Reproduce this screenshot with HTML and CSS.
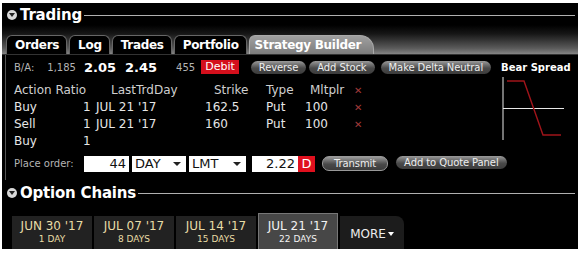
FILE: index.html
```html
<!DOCTYPE html>
<html lang="en">
<head>
    <meta charset="UTF-8">
    <title>Trading - Strategy Builder</title>
    <link rel="stylesheet" href="styles.css">
</head>
<body>
    <div class="frame">
        <div class="section-head">
            <span class="caret"></span>
            <h2>Trading</h2>
            <span class="rule"></span>
        </div>

        <div class="tabbar">
            <div class="tab">Orders</div>
            <div class="tab">Log</div>
            <div class="tab">Trades</div>
            <div class="tab">Portfolio</div>
            <div class="tab active">Strategy Builder</div>
        </div>

        <div class="panel">
            <div class="ba-row">
                <span class="muted ba-label">B/A:</span>
                <span class="muted bid-size">1,185</span>
                <span class="price">2.05</span>
                <span class="price">2.45</span>
                <span class="muted ask-size">455</span>
                <span class="debit">Debit</span>
                <span class="pill">Reverse</span>
                <span class="pill">Add Stock</span>
                <span class="pill">Make Delta Neutral</span>
                <span class="strategy-name">Bear Spread</span>
            </div>

            <div class="legs-area">
                <div class="legs">
                    <div class="leg head">
                        <span class="c-action">Action Ratio</span>
                        <span class="c-ratio"></span>
                        <span class="c-date h">LastTrdDay</span>
                        <span class="c-strike h">Strike</span>
                        <span class="c-type">Type</span>
                        <span class="c-mult h">Mltplr</span>
                        <span class="c-del">&#x2715;</span>
                    </div>
                    <div class="leg">
                        <span class="c-action">Buy</span>
                        <span class="c-ratio">1</span>
                        <span class="c-date">JUL 21 '17</span>
                        <span class="c-strike">162.5</span>
                        <span class="c-type">Put</span>
                        <span class="c-mult">100</span>
                        <span class="c-del">&#x2715;</span>
                    </div>
                    <div class="leg">
                        <span class="c-action">Sell</span>
                        <span class="c-ratio">1</span>
                        <span class="c-date">JUL 21 '17</span>
                        <span class="c-strike">160</span>
                        <span class="c-type">Put</span>
                        <span class="c-mult">100</span>
                        <span class="c-del">&#x2715;</span>
                    </div>
                    <div class="leg">
                        <span class="c-action">Buy</span>
                        <span class="c-ratio">1</span>
                    </div>
                </div>

                <svg class="payoff" width="66" height="64" viewBox="0 0 66 64">
                    <line x1="2" y1="0" x2="2" y2="63" stroke="#e8e8e8" stroke-width="1"/>
                    <line x1="2" y1="31.5" x2="63" y2="31.5" stroke="#e8e8e8" stroke-width="1"/>
                    <polyline points="6,4 23,4 42,58 60,58" fill="none" stroke="#a0141a" stroke-width="1.4"/>
                </svg>
            </div>

            <div class="order-row">
                <span class="muted order-label">Place order:</span>
                <span class="field qty">44</span>
                <span class="field select tif">DAY<i class="arrow"></i></span>
                <span class="field select otype">LMT<i class="arrow"></i></span>
                <span class="field limit">2.22</span><span class="side">D</span>
                <span class="pill transmit">Transmit</span>
                <span class="pill quote">Add to Quote Panel</span>
            </div>
        </div>

        <div class="section-head chains-head">
            <span class="caret"></span>
            <h2>Option Chains</h2>
            <span class="rule"></span>
        </div>

        <div class="expiries">
            <div class="expiry"><b>JUN 30 '17</b><small>1 DAY</small></div>
            <div class="expiry"><b>JUL 07 '17</b><small>8 DAYS</small></div>
            <div class="expiry"><b>JUL 14 '17</b><small>15 DAYS</small></div>
            <div class="expiry selected"><b>JUL 21 '17</b><small>22 DAYS</small></div>
            <div class="expiry more">MORE <i class="arrow light"></i></div>
        </div>
    </div>
</body>
</html>
```

FILE: styles.css
```css
* {
    margin: 0;
    padding: 0;
    box-sizing: border-box;
}

body {
    background: #fff;
    font-family: "DejaVu Sans", Verdana, sans-serif;
    color: #e2e2e2;
}

.frame {
    margin: 3px 2px 0 2px;
    height: 246px;
    background: #000;
    display: flex;
    flex-direction: column;
    overflow: hidden;
}

/* section headers */
.section-head {
    display: flex;
    align-items: center;
    height: 20px;
    margin-top: 2px;
    padding-left: 5px;
    flex-shrink: 0;
}

.section-head h2 {
    font-size: 15px;
    font-weight: bold;
    color: #fff;
    margin-left: 3px;
    letter-spacing: -0.2px;
}

.caret {
    width: 10px;
    height: 10px;
    border-radius: 50%;
    background: #d8d8d8;
    position: relative;
}

.caret::after {
    content: '';
    position: absolute;
    left: 2px;
    top: 3px;
    border-left: 3px solid transparent;
    border-right: 3px solid transparent;
    border-top: 4px solid #222;
}

.rule {
    flex: 1;
    height: 1px;
    background: #b0b0b0;
    margin: 0 3px 0 2px;
}

/* tabs */
.tabbar {
    height: 30px;
    flex-shrink: 0;
    display: flex;
    align-items: flex-end;
    padding-left: 4px;
    gap: 2px;
    background: linear-gradient(to bottom, #000 0%, #161616 30%, #5a5a5a 80%, #858585 100%);
    border-bottom: 1px solid #333;
}

.tab {
    height: 19px;
    padding: 0 7px 0 8px;
    background: #000;
    border: 1px solid #666;
    border-bottom: none;
    border-radius: 6px 6px 0 0;
    font-size: 12px;
    font-weight: bold;
    color: #fff;
    line-height: 18px;
    letter-spacing: -0.3px;
}

.tab.active {
    background: linear-gradient(to bottom, #a0a0a0, #7c7c7c);
    border-color: #aaa;
    padding: 0 12px 0 5px;
    border-radius: 6px 14px 0 0;
}

/* panel */
.panel {
    margin-left: 3px;
    border-left: 1px solid #555;
    height: 125px;
    flex-shrink: 0;
    padding-left: 8px;
}

.muted {
    color: #b4b4b4;
    font-size: 10px;
}

.ba-row {
    display: flex;
    align-items: center;
    height: 14px;
    margin-top: 5px;
    white-space: nowrap;
}

.bid-size { margin-left: 13px; }

.price {
    font-size: 13px;
    font-weight: bold;
    color: #fff;
    margin-left: 8px;
}

.price + .price { margin-left: 9px; }

.ask-size { margin-left: 19px; }

.debit {
    margin-left: 6px;
    background: #d40f1c;
    color: #fff;
    font-size: 11px;
    height: 14px;
    line-height: 14px;
    padding: 0 4px;
}

.pill {
    margin-left: 12px;
    height: 13px;
    line-height: 13px;
    padding: 0 8px;
    border-radius: 7px;
    background: linear-gradient(to bottom, #9a9a9a, #4a4a4a 55%, #3c3c3c);
    color: #eee;
    font-size: 10px;
    letter-spacing: -0.1px;
    white-space: nowrap;
}

.pill + .pill { margin-left: 3px; }
.pill + .pill + .pill { margin-left: 6px; }

.strategy-name {
    margin-left: 10px;
    font-size: 10px;
    font-weight: bold;
    color: #fff;
}

/* legs table */
.legs-area {
    display: flex;
    height: 68px;
    margin-top: 8px;
}

.legs {
    width: 487px;
}

.leg {
    display: flex;
    height: 17px;
    font-size: 12px;
    line-height: 17px;
    color: #e6e6e6;
}

.leg.head { color: #cfcfcf; }

.c-action { width: 66px; white-space: nowrap; }
.c-ratio { width: 14px; padding-left: 3px; }
.c-date { width: 106px; padding-left: 2px; }
.c-date.h { padding-left: 17px; }
.c-strike { width: 62px; padding-left: 5px; }
.c-strike.h { padding-left: 14px; }
.c-type { width: 40px; padding-left: 4px; }
.c-mult { width: 48px; padding-left: 3px; }
.c-mult.h { padding-left: 8px; }
.c-del { color: #a33a3a; font-size: 10px; padding-left: 4px; }

.payoff {
    margin-top: -5px;
}

/* order entry */
.order-row {
    display: flex;
    align-items: center;
    height: 17px;
    margin-top: 5px;
}

.order-label { width: 70px; }

.field {
    height: 16px;
    background: #fff;
    color: #111;
    font-size: 13px;
    line-height: 16px;
    padding: 0 3px;
}

.qty { width: 45px; text-align: right; }

.select {
    margin-left: 3px;
    display: flex;
    align-items: center;
    justify-content: space-between;
    padding-right: 5px;
}

.tif { width: 54px; }
.otype { width: 57px; }

.arrow {
    border-left: 4px solid transparent;
    border-right: 4px solid transparent;
    border-top: 4px solid #222;
}

.arrow.light {
    display: inline-block;
    vertical-align: 2px;
    margin-left: 2px;
    border-width: 4px 3px 0 3px;
    border-top-color: #fff;
}

.limit {
    margin-left: 6px;
    width: 46px;
    text-align: right;
}

.side {
    width: 17px;
    height: 16px;
    background: #e0101e;
    color: #fff;
    font-size: 13px;
    line-height: 16px;
    text-align: center;
}

.order-row .transmit {
    margin-left: 7px;
    height: 15px;
    line-height: 13px;
    padding: 0 11px;
    border: 1px solid #999;
}

.order-row .quote {
    margin-left: 8px;
    margin-top: -2px;
    padding: 0 8px;
}

/* option chains */
.chains-head {
    margin-top: 3px;
}

.expiries {
    display: flex;
    align-items: flex-end;
    margin-top: 10px;
    padding-left: 10px;
    gap: 2px;
    height: 41px;
    flex-shrink: 0;
    border-bottom: 3px solid #5c5c5c;
}

.expiry {
    width: 80px;
    height: 35px;
    background: #222;
    display: flex;
    flex-direction: column;
    align-items: center;
    padding-top: 3px;
    color: #e8dca6;
}

.expiry b {
    font-weight: normal;
    font-size: 12px;
}

.expiry small {
    font-size: 9px;
    margin-top: 1px;
}

.expiry.selected {
    height: 38px;
    background: #474747;
    border: 1px solid #777;
    border-bottom: none;
    color: #f2f2f2;
    padding-top: 5px;
}

.expiry.more {
    width: 64px;
    background: #1c1c1c;
    border-radius: 0 8px 0 0;
    color: #eee;
    font-size: 12px;
    flex-direction: row;
    justify-content: center;
    padding-top: 0;
}
```
